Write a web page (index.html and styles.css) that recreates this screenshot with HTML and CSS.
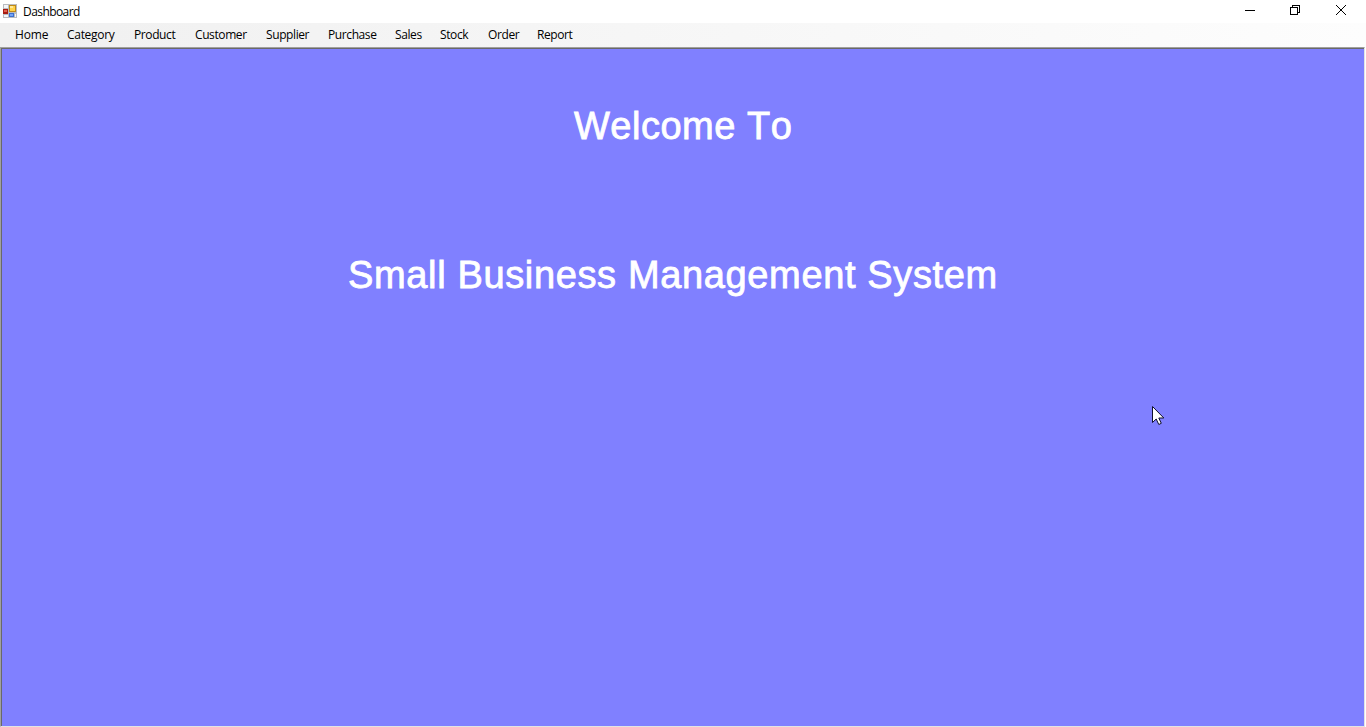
FILE: index.html
```html
<!DOCTYPE html>
<html lang="en">
<head>
<meta charset="utf-8">
<title>Dashboard</title>
<link rel="stylesheet" href="styles.css">
</head>
<body>
<div class="window">
  <header class="titlebar">
    <svg class="app-icon" width="14" height="14" viewBox="0 0 14 14" shape-rendering="crispEdges">
      <path fill="#b9bcc0" d="M0 0h14v14H0z"/>
      <path fill="#f4f6fa" d="M1 1h4v3H1zM1 11h4v2H1zM12 10h1v3h-1z"/>
      <path fill="#a81c12" d="M0 5h5v5H0z"/><path fill="#e2604e" d="M1 6h3v2H1z"/>
      <path fill="#c08a16" d="M6 1h7v7H6z"/><path fill="#ffd34a" d="M7 2h5v5H7z"/><path fill="#ffe99a" d="M7 2h3v2H7z"/>
      <path fill="#3c6fd0" d="M6 9h5v4H6z"/><path fill="#76a5f5" d="M7 10h3v2H7z"/>
    </svg>
    <span class="title">Dashboard</span>
    <div class="controls">
      <svg width="46" height="22" viewBox="0 0 46 22" shape-rendering="crispEdges"><path fill="#000" d="M18 10h10v1H18z"/></svg>
      <svg width="46" height="22" viewBox="0 0 46 22" shape-rendering="crispEdges" fill="none" stroke="#000"><path d="M17.500 7.500h7v7h-7zM19.500 7.500v-2h7v7h-2"/></svg>
      <svg width="46" height="22" viewBox="0 0 46 22" fill="none" stroke="#000"><path d="M17 5l10 10M27 5l-10 10"/></svg>
    </div>
  </header>
  <nav class="menu">
    <span class="item home">Home</span>
    <span class="item category">Category</span>
    <span class="item product">Product</span>
    <span class="item customer">Customer</span>
    <span class="item supplier">Supplier</span>
    <span class="item purchase">Purchase</span>
    <span class="item sales">Sales</span>
    <span class="item stock">Stock</span>
    <span class="item order">Order</span>
    <span class="item report">Report</span>
  </nav>
  <main class="client">
    <h1 class="welcome">Welcome To</h1>
    <h2 class="system">Small Business Management System</h2>
  </main>
  <svg class="cursor" width="14" height="21" viewBox="0 0 14 21"><path fill="#fff" stroke="#10102c" d="M1.500 1.500v16l3.700-3.500 2.600 5.500 2.500-1.200-2.500-5.300h5z"/></svg>
</div>
</body>
</html>
```
FILE: styles.css
```css
body {
  margin: 0;
  overflow: hidden;
}

.window {
  position: relative;
  display: flex;
  flex-direction: column;
  width: 1366px;
  height: 727px;
  background: #fff;
  color: #000;
  font-family: "Open Sans", "Noto Sans", sans-serif;
  font-size: 12px;
  letter-spacing: -0.4px;
}

.titlebar {
  display: flex;
  align-items: flex-start;
  height: 23px;
}

.app-icon {
  margin: 4px 6px 0 3px;
}

.title {
  line-height: 16px;
  margin-top: 4px;
  letter-spacing: -0.57px;
}

.controls {
  display: flex;
  margin-left: auto;
  padding-right: 1px;
}

.menu {
  display: flex;
  height: 24px;
  padding-left: 15px;
  line-height: 24px;
  background: linear-gradient(90deg, #f0f0f0, #fdfdfd);
}

.item {
  white-space: nowrap;
}

.home { width: 52px; letter-spacing: -0.15px; }
.category { width: 67px; letter-spacing: -0.3px; }
.product { width: 61px; }
.customer { width: 71px; }
.supplier { width: 62px; }
.purchase { width: 67px; }
.sales { width: 45px; }
.stock { width: 48px; }
.order { width: 49px; }

.client {
  flex: 1;
  box-sizing: border-box;
  margin-right: 1px;
  border-style: solid;
  border-width: 1px;
  border-color: #a0a0a0 #e3e3e3 #e3e3e3 #a0a0a0;
  box-shadow: inset 1px 1px #696969;
  background: #8080ff;
  color: #fff;
  font-family: "Liberation Sans", Arial, sans-serif;
}

.welcome,
.system {
  margin: 0;
  font-size: 38px;
  font-weight: 400;
  font-kerning: none;
  line-height: 44px;
  white-space: nowrap;
  -webkit-text-stroke: 0.8px #fff;
}

.welcome {
  padding: 56px 0 0 573px;
  letter-spacing: 0.5px;
}

.system {
  padding: 105px 0 0 347px;
  letter-spacing: 0.64px;
}

.cursor {
  position: absolute;
  left: 1151px;
  top: 405px;
}
```
